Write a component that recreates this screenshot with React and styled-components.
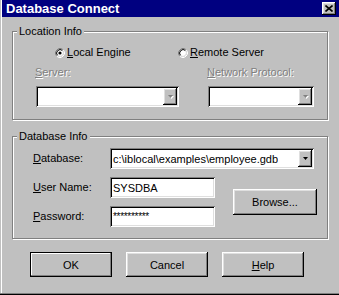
import React from 'react'
import styled, { createGlobalStyle, css } from 'styled-components'

const GlobalStyle = createGlobalStyle`
    html, body {
        margin: 0;
        padding: 0;
        background: #c0c0c0;
    }
    body {
        font-family: "Liberation Sans", Arial, sans-serif;
        font-size: 11px;
        color: #000;
    }
`

// bevels
const raised = css`
    box-shadow: inset -1px -1px #000, inset 1px 1px #fff,
        inset -2px -2px #808080, inset 2px 2px #dfdfdf;
`
const sunken = css`
    box-shadow: inset 1px 1px #808080, inset -1px -1px #fff,
        inset 2px 2px #000, inset -2px -2px #dfdfdf;
`

const Window = styled.div`
    width: 339px;
    height: 295px;
    box-sizing: border-box;
    padding: 0 0 2px 2px;
    background: #c0c0c0;
    box-shadow: inset 0 -1px #000, inset 0 -2px #808080,
        inset 1px 0 #c0c0c0, inset 2px 0 #fff;
    display: flex;
    flex-direction: column;
`

const TitleBar = styled.div`
    height: 17px;
    flex-shrink: 0;
    background: #000080;
    color: #fff;
    display: flex;
    align-items: center;
    justify-content: space-between;
    padding: 0 3px 0 4px;
    font-size: 13px;
    font-weight: bold;
`

const CloseButton = styled.div`
    width: 14px;
    height: 13px;
    background: #c0c0c0;
    ${raised}
    display: flex;
    align-items: center;
    justify-content: center;
`

const Body = styled.div`
    padding: 8px 0 0 10px;
    display: flex;
    flex-direction: column;
`

const Group = styled.fieldset`
    margin: ${(p) => p.$top || 0}px 0 0 0;
    padding: ${(p) => p.$pad};
    width: 316px;
    min-inline-size: 0;
    box-sizing: border-box;
    border: 1px solid #808080;
    box-shadow: inset 1px 1px #fff, 1px 1px #fff;
`

const Legend = styled.legend`
    margin-left: 4px;
    padding: 0 2px;
    line-height: 13px;
    background: #c0c0c0;
`

const RadioRow = styled.div`
    display: grid;
    grid-template-columns: 123px auto;
    padding-left: 42px;
    height: 13px;
    line-height: 13px;
`

const Radio = styled.div`
    display: flex;
    align-items: center;
    gap: 2px;
`

const FieldGrid = styled.div`
    margin-top: 7px;
    display: grid;
    grid-template-columns: 143px 106px;
    column-gap: 29px;
    row-gap: 7px;
    padding-left: 23px;
`

const Label = styled.div`
    line-height: 13px;
    align-self: center;
    white-space: nowrap;
    color: ${(p) => (p.$disabled ? '#808080' : '#000')};
    text-shadow: ${(p) => (p.$disabled ? '1px 1px 0 #fff' : 'none')};
    margin-left: ${(p) => (p.$disabled ? '-1px' : '0')};
`

const Key = styled.span`
    text-decoration: underline;
    text-underline-offset: 1px;
`

const Combo = styled.div`
    width: ${(p) => p.$w}px;
    height: 21px;
    box-sizing: border-box;
    padding: 2px;
    background: #fff;
    ${sunken}
    display: flex;
    align-items: center;
    justify-content: space-between;
    grid-column: ${(p) => p.$span || 'auto'};
`

const ComboText = styled.span`
    padding-left: 1px;
    white-space: nowrap;
    overflow: hidden;
`

const DropButton = styled.div`
    width: 14px;
    height: 17px;
    flex-shrink: 0;
    background: #c0c0c0;
    ${raised}
    display: flex;
    align-items: center;
    justify-content: center;
`

const DbGrid = styled.div`
    display: grid;
    grid-template-columns: 77px 123px 84px;
    grid-template-rows: 21px 21px 21px;
    row-gap: 8px;
    padding-left: 20px;
`

const TextField = styled.div`
    width: 105px;
    height: 21px;
    box-sizing: border-box;
    padding: 0 3px;
    background: #fff;
    ${sunken}
    display: flex;
    align-items: center;
    font-size: ${(p) => (p.$secret ? '10px' : '11px')};
    letter-spacing: ${(p) => (p.$secret ? '-0.3px' : '0')};
`

const Button = styled.div`
    width: ${(p) => p.$w || 82}px;
    height: ${(p) => p.$h || 25}px;
    box-sizing: border-box;
    background: #c0c0c0;
    display: flex;
    align-items: center;
    justify-content: center;
    ${(p) =>
        p.$default
            ? css`
                  box-shadow: inset 0 0 0 1px #000, inset -2px -2px #808080,
                      inset 2px 2px #fff;
              `
            : raised}
`

const BrowseButton = styled(Button)`
    grid-column: 3;
    grid-row: 2 / 4;
    align-self: center;
`

const ButtonRow = styled.div`
    margin-top: 13px;
    padding-left: 18px;
    display: flex;
    gap: 14px;
`

function RadioMark({ checked }) {
    return (
        <svg width="10" height="10" viewBox="0 0 10 10">
            <circle cx="5" cy="5" r="3.5" fill="#fff" />
            <path d="M1.82 8.18 A4.5 4.5 0 0 1 8.18 1.82" fill="none" stroke="#808080" />
            <path d="M8.18 1.82 A4.5 4.5 0 0 1 1.82 8.18" fill="none" stroke="#fff" />
            <path d="M2.53 7.47 A3.5 3.5 0 0 1 7.47 2.53" fill="none" stroke="#000" />
            <path d="M7.47 2.53 A3.5 3.5 0 0 1 2.53 7.47" fill="none" stroke="#dfdfdf" />
            {checked && <circle cx="5" cy="5" r="1.6" fill="#000" />}
        </svg>
    )
}

function Arrow({ disabled }) {
    return (
        <svg width="7" height="5" viewBox="0 0 7 5">
            {disabled && <path d="M2 2h5l-2.5 3z" fill="#fff" />}
            <path d="M1 1h5l-2.5 3z" fill={disabled ? '#808080' : '#000'} />
        </svg>
    )
}

export default function App() {
    return (
        <>
            <GlobalStyle />
            <Window>
                <TitleBar>
                    <span>Database Connect</span>
                    <CloseButton>
                        <svg width="8" height="7" viewBox="0 0 8 7">
                            <path d="M0.5 0.5 L7.5 6.5 M7.5 0.5 L0.5 6.5" stroke="#000" strokeWidth="1.6" />
                        </svg>
                    </CloseButton>
                </TitleBar>

                <Body>
                    <Group $pad="8px 0 12px 0">
                        <Legend>Location Info</Legend>
                        <RadioRow>
                            <Radio>
                                <RadioMark checked />
                                <span><Key>L</Key>ocal Engine</span>
                            </Radio>
                            <Radio>
                                <RadioMark />
                                <span><Key>R</Key>emote Server</span>
                            </Radio>
                        </RadioRow>
                        <FieldGrid>
                            <Label $disabled><Key>S</Key>erver:</Label>
                            <Label $disabled><Key>N</Key>etwork Protocol:</Label>
                            <Combo $w={143}>
                                <ComboText />
                                <DropButton><Arrow disabled /></DropButton>
                            </Combo>
                            <Combo $w={106}>
                                <ComboText />
                                <DropButton><Arrow disabled /></DropButton>
                            </Combo>
                        </FieldGrid>
                    </Group>

                    <Group $top={10} $pad="5px 0 11px 0">
                        <Legend>Database Info</Legend>
                        <DbGrid>
                            <Label><Key>D</Key>atabase:</Label>
                            <Combo $w={204} $span="2 / 4">
                                <ComboText>c:\iblocal\examples\employee.gdb</ComboText>
                                <DropButton><Arrow /></DropButton>
                            </Combo>
                            <Label><Key>U</Key>ser Name:</Label>
                            <TextField>SYSDBA</TextField>
                            <BrowseButton $w={84} $h={26}>Browse...</BrowseButton>
                            <Label><Key>P</Key>assword:</Label>
                            <TextField $secret>**********</TextField>
                        </DbGrid>
                    </Group>

                    <ButtonRow>
                        <Button $default>OK</Button>
                        <Button>Cancel</Button>
                        <Button><Key>H</Key>elp</Button>
                    </ButtonRow>
                </Body>
            </Window>
        </>
    )
}
